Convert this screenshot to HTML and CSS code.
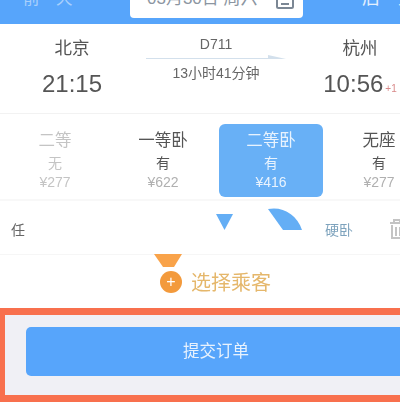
FILE: index.html
```html
<!DOCTYPE html>
<html lang="zh-CN">
<head>
  <meta charset="UTF-8">
  <meta name="viewport" content="width=device-width, initial-scale=1.0">
  <title>提交订单</title>
  <link rel="stylesheet" href="styles.css">
</head>
<body>
  <div class="page">
    <div class="date-bar">
      <span class="day-link prev">前一天</span>
      <div class="date-box">
        <span class="date-text">03月30日 周六</span>
        <svg class="cal-icon" width="18" height="22" viewBox="0 0 18 22">
          <rect x="1" y="1" width="16" height="17" rx="1.5" fill="none" stroke="#7b8794" stroke-width="2"/>
          <rect x="5" y="13" width="8" height="2" fill="#7b8794"/>
        </svg>
      </div>
      <span class="day-link next">后一天</span>
    </div>

    <div class="train">
      <div class="station">
        <div class="city">北京</div>
        <div class="time">21:15</div>
      </div>
      <div class="trip">
        <div class="train-no">D711</div>
        <svg class="arrow" width="140" height="6" viewBox="0 0 140 6">
          <path d="M0 4H140L122 0V3H0Z" fill="#d3e0ec"/>
        </svg>
        <div class="duration">13小时41分钟</div>
      </div>
      <div class="station arrive">
        <div class="city">杭州</div>
        <div class="time">10:56<span class="plus">+1</span></div>
      </div>
    </div>

    <div class="seats">
      <div class="seat off"><div class="seat-name">二等</div><div class="seat-left">无</div><div class="seat-price">¥277</div></div>
      <div class="seat"><div class="seat-name">一等卧</div><div class="seat-left">有</div><div class="seat-price">¥622</div></div>
      <div class="seat active"><div class="seat-name">二等卧</div><div class="seat-left">有</div><div class="seat-price">¥416</div></div>
      <div class="seat"><div class="seat-name">无座</div><div class="seat-left">有</div><div class="seat-price">¥277</div></div>
    </div>

    <div class="passenger">
      <span class="passenger-name">任</span>
      <svg class="tri" width="17" height="16" viewBox="0 0 17 16"><path d="M0 0H17L8.500 16Z" fill="#64aef5"/></svg>
      <svg class="wedge" width="34" height="23" viewBox="0 0 34 23"><path d="M0 1C14 -2 29 6 34 22L15 22Z" fill="#64aef5"/></svg>
      <span class="berth">硬卧</span>
      <svg class="trash" width="14" height="20" viewBox="0 0 14 20">
        <path d="M0 4H14M4 4V1H10V4M2 6V19H14V6M6 8V17M10 8V17" fill="none" stroke="#c4c4c4" stroke-width="2"/>
      </svg>
    </div>

    <div class="add-row">
      <svg class="funnel" width="28" height="13" viewBox="0 0 28 13"><path d="M0 0H28L20 13H9Z" fill="#f9a34a"/></svg>
      <div class="add-passenger">
        <span class="plus-btn">+</span>
        <span class="add-text">选择乘客</span>
      </div>
    </div>

    <div class="submit-bar">
      <div class="submit-btn">提交订单</div>
    </div>
  </div>
</body>
</html>
```

FILE: styles.css
```css
html, body {
  margin: 0;
  height: 100%;
}
body {
  font-family: "Liberation Sans", "Noto Sans CJK SC", sans-serif;
  background-color: #fff;
  overflow: hidden;
}
.page {
  width: 400px;
  height: 406px;
  display: flex;
  flex-direction: column;
  overflow: hidden;
  filter: blur(0.4px);
}
.date-bar {
  height: 24px;
  flex-shrink: 0;
  background-color: #57a5fb;
  display: flex;
  overflow: hidden;
  color: #a9d0fb;
  font-size: 16px;
}
.day-link {
  flex-shrink: 0;
  line-height: 16px;
  margin-top: -10px;
  white-space: nowrap;
}
.prev {
  width: 107px;
  padding-left: 23px;
  font-size: 16.5px;
}
.next {
  color: #e3f0fe;
  margin-left: 59px;
  font-size: 18px;
}
.date-box {
  width: 173px;
  height: 18px;
  flex-shrink: 0;
  box-sizing: border-box;
  padding-left: 17px;
  background-color: #fff;
  border-radius: 0 0 4px 4px;
  color: #8b95a1;
  display: flex;
  gap: 18px;
  align-items: flex-start;
  overflow: hidden;
}
.date-text {
  font-size: 17px;
  line-height: 17px;
  margin-top: -10px;
  white-space: nowrap;
}
.cal-icon {
  flex-shrink: 0;
  margin-top: -10px;
}
.train {
  height: 90px;
  flex-shrink: 0;
  display: flex;
  box-sizing: border-box;
  padding: 13px 0 0 42px;
  color: #555;
  border-bottom: 1px solid #f2f2f2;
}
.station {
  width: 60px;
  text-align: center;
}
.arrive {
  width: 80px;
  margin-left: 34px;
}
.city {
  font-size: 17.500px;
  line-height: 22px;
}
.time {
  margin-top: 10px;
  font-size: 24px;
  line-height: 30px;
  white-space: nowrap;
}
.plus {
  font-size: 10px;
  color: #d98a8a;
  margin-left: 2px;
}
.trip {
  width: 140px;
  margin-left: 44px;
  text-align: center;
  color: #666;
}
.train-no {
  font-size: 14px;
  line-height: 16px;
  margin-top: -1px;
}
.arrow {
  display: block;
  margin-top: 3px;
}
.duration {
  font-size: 14px;
  line-height: 18px;
  margin-top: 3px;
}
.seats {
  height: 87px;
  flex-shrink: 0;
  display: grid;
  grid-template-columns: repeat(4, 104px);
  column-gap: 4px;
  padding: 10px 0 0 3px;
  box-sizing: border-box;
  border-bottom: 2px solid #f8f8f8;
}
.seat {
  height: 73px;
  border-radius: 6px;
  text-align: center;
  color: #555;
  padding-top: 5px;
  box-sizing: border-box;
}
.seat-name {
  line-height: 22px;
  font-size: 16.500px;
}
.seat-left {
  line-height: 20px;
  font-size: 14px;
  margin-top: 2px;
}
.seat-price {
  line-height: 18px;
  font-size: 14px;
  margin-top: 0;
  color: #b0b0b0;
}
.off,
.off .seat-price {
  color: #c4c4c4;
}
.active {
  background-color: #68b0f6;
  color: #e8f3fe;
}
.active .seat-price {
  color: #e8f3fe;
}
.passenger {
  height: 54px;
  flex-shrink: 0;
  position: relative;
  display: flex;
  align-items: center;
  box-sizing: border-box;
  border-bottom: 1px solid #f6f6f6;
  padding: 3px 0 0 11px;
}
.passenger-name {
  font-size: 14px;
  color: #666;
}
/* leftover shapes sitting over the row */
.tri {
  position: absolute;
  left: 216px;
  top: 13px;
}
.wedge {
  position: absolute;
  left: 268px;
  top: 7px;
}
.berth {
  margin-left: auto;
  font-size: 14px;
  color: #7ea3bd;
}
.trash {
  margin: 0 -4px 0 37px;
  flex-shrink: 0;
}
.add-row {
  height: 53px;
  flex-shrink: 0;
  position: relative;
}
.funnel {
  position: absolute;
  left: 154px;
  top: -1px;
}
.add-passenger {
  display: flex;
  align-items: center;
  gap: 9px;
  padding: 12px 0 0 160px;
}
.plus-btn {
  width: 22px;
  height: 22px;
  border-radius: 50%;
  background-color: #f39a3c;
  color: #fff;
  font-size: 16px;
  line-height: 22px;
  text-align: center;
}
.add-text {
  font-size: 20px;
  color: #e5b76b;
}
.submit-bar {
  height: 94px;
  flex-shrink: 0;
  box-sizing: border-box;
  background-color: #f0f0f5;
  border: solid #f8704e;
  border-width: 7px 0 7px 5px;
  padding: 12px 0 0 21px;
}
.submit-btn {
  height: 49px;
  margin-right: -6px;
  background-color: #57a5fb;
  border-radius: 5px;
  color: #e8f2fd;
  font-size: 16.500px;
  line-height: 49px;
  text-align: center;
}
```
